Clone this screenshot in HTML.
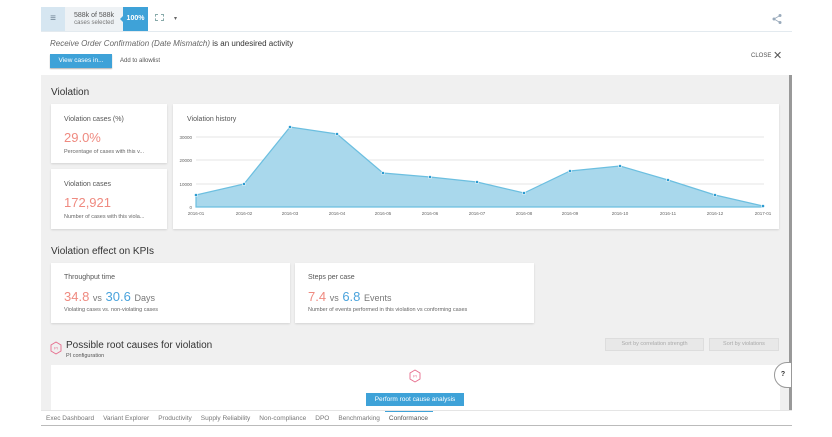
<!DOCTYPE html>
<html><head><style>
*{margin:0;padding:0;box-sizing:border-box}
body{width:832px;height:437px;background:#fff;font-family:"Liberation Sans",sans-serif;position:relative;overflow:hidden;color:#333}
.a{position:absolute}
.card{position:absolute;background:#fff;box-shadow:0 1px 2px rgba(0,0,0,.12)}
.lbl{font-size:7px;color:#555}
.sm{font-size:5.5px;color:#666}
</style></head><body>
<div class="a" style="left:41px;top:7px;width:24px;height:24px;background:#d6e6f1;color:#6a7f90;font-size:10px;text-align:center;line-height:24px">≡</div>
<div class="a" style="left:65px;top:7px;width:58px;height:24px;background:#eef2f5;text-align:center;font-size:7px;color:#555;padding-top:5px;line-height:7px">588k of 588k<br><span style="font-size:6px;color:#777">cases selected</span></div>
<div class="a" style="left:123px;top:7px;width:25px;height:24px;background:#3ea2d8;color:#fff;font-size:7px;font-weight:bold;text-align:center;line-height:24px">100%</div>
<div class="a" style="left:120px;top:16px;width:0;height:0;border-top:3px solid transparent;border-bottom:3px solid transparent;border-right:3px solid #3ea2d8"></div>
<div class="a" style="left:155px;top:14px;width:9px;height:7px;border:1px dashed #8aa"></div>
<div class="a" style="left:174px;top:15px;font-size:6px;color:#666">▾</div>
<svg class="a" style="left:772px;top:14px" width="10" height="10"><g stroke="#9ab" stroke-width=".8" fill="#9ab"><line x1="8" y1="1.5" x2="2" y2="5"/><line x1="2" y1="5" x2="8" y2="8.5"/><circle cx="8" cy="1.5" r="1.1"/><circle cx="2" cy="5" r="1.1"/><circle cx="8" cy="8.5" r="1.1"/></g></svg>
<div class="a" style="left:41px;top:31px;width:751px;height:1px;background:#e3eaef"></div>
<div class="a" style="left:50px;top:39px;font-size:8px;color:#333"><i style="color:#666">Receive Order Confirmation (Date Mismatch)</i> is an undesired activity</div>
<div class="a" style="left:751px;top:49px;font-size:6px;color:#555">CLOSE <span style="font-size:11px;vertical-align:-2px">✕</span></div>
<div class="a" style="left:50px;top:54px;width:62px;height:14px;background:#3ea2d8;color:#fff;font-size:6.5px;text-align:center;line-height:14px;box-shadow:0 1px 1px rgba(0,0,0,.3)">View cases in...</div>
<div class="a" style="left:120px;top:58px;font-size:6px;color:#555">Add to allowlist</div>
<div class="a" style="left:41px;top:75px;width:749px;height:336px;background:#f0f0f0"></div>
<div class="a" style="left:789px;top:75px;width:3px;height:336px;background:#999"></div>
<div class="a" style="left:51px;top:87px;font-size:10px;color:#333">Violation</div>
<div class="card" style="left:51px;top:104px;width:116px;height:59px">
 <div class="a lbl" style="left:13px;top:12px">Violation cases (%)</div>
 <div class="a" style="left:13px;top:26px;font-size:13px;color:#ef8a80">29.0%</div>
 <div class="a sm" style="left:13px;top:45px">Percentage of cases with this v...</div>
</div>
<div class="card" style="left:51px;top:169px;width:116px;height:60px">
 <div class="a lbl" style="left:13px;top:12px">Violation cases</div>
 <div class="a" style="left:13px;top:26px;font-size:13px;color:#ef8a80">172,921</div>
 <div class="a sm" style="left:13px;top:45px">Number of cases with this viola...</div>
</div>
<div class="card" style="left:173px;top:104px;width:606px;height:125px"></div>
<div class="a lbl" style="left:187px;top:116px">Violation history</div>
<div class="a" style="left:51px;top:365px;width:729px;height:46px;background:#fff"></div>
<svg class="a" style="left:0;top:0;z-index:1" width="832" height="437">
 <g stroke="#e6e6e6" stroke-width="1"><line x1="196" y1="137" x2="764" y2="137"/><line x1="196" y1="160" x2="764" y2="160"/><line x1="196" y1="184" x2="764" y2="184"/><line x1="196" y1="207" x2="764" y2="207" stroke="#ccc"/></g>
 <polygon points="196,207 196,195 244,184 290,127 337,134 383,173 430,177 477,182 524,193 570,171 620,166 668,180 715,195 763,206 763,207" fill="#a9d8ec" stroke="#6cbfe0" stroke-width="1.2"/>
 <g fill="#2a9ad0" stroke="#fff" stroke-width=".6"><circle cx="196" cy="195" r="1.6"/><circle cx="244" cy="184" r="1.6"/><circle cx="290" cy="127" r="1.6"/><circle cx="337" cy="134" r="1.6"/><circle cx="383" cy="173" r="1.6"/><circle cx="430" cy="177" r="1.6"/><circle cx="477" cy="182" r="1.6"/><circle cx="524" cy="193" r="1.6"/><circle cx="570" cy="171" r="1.6"/><circle cx="620" cy="166" r="1.6"/><circle cx="668" cy="180" r="1.6"/><circle cx="715" cy="195" r="1.6"/><circle cx="763" cy="206" r="1.6"/></g>
 <g font-family="Liberation Sans" font-size="4.5" fill="#666" text-anchor="end"><text x="192" y="139">30000</text><text x="192" y="162">20000</text><text x="192" y="186">10000</text><text x="192" y="209">0</text></g>
 <g font-family="Liberation Sans" font-size="4.5" fill="#666" text-anchor="middle"><text x="196" y="215">2016-01</text><text x="244" y="215">2016-02</text><text x="290" y="215">2016-03</text><text x="337" y="215">2016-04</text><text x="383" y="215">2016-05</text><text x="430" y="215">2016-06</text><text x="477" y="215">2016-07</text><text x="524" y="215">2016-08</text><text x="570" y="215">2016-09</text><text x="620" y="215">2016-10</text><text x="668" y="215">2016-11</text><text x="715" y="215">2016-12</text><text x="763" y="215">2017-01</text></g>
 <g fill="none" stroke="#e66c8c" stroke-width=".9"><polygon points="56,342 61,345 61,351 56,354 51,351 51,345"/><polygon points="415,370 420,373 420,379 415,382 410,379 410,373"/></g>
 <g font-family="Liberation Sans" font-size="4" fill="#e66c8c" text-anchor="middle"><text x="56" y="349.5">PI</text><text x="415" y="377.5">PI</text></g>
</svg>
<div class="a" style="left:51px;top:246px;font-size:10px;color:#333">Violation effect on KPIs</div>
<div class="card" style="left:51px;top:263px;width:239px;height:60px">
 <div class="a lbl" style="left:13px;top:11px">Throughput time</div>
 <div class="a" style="left:13px;top:26px;font-size:13px;color:#ef8a80">34.8 <span style="font-size:9px;color:#777">vs</span> <span style="color:#4aa3dc">30.6</span> <span style="font-size:9px;color:#777">Days</span></div>
 <div class="a sm" style="left:13px;top:44px">Violating cases vs. non-violating cases</div>
</div>
<div class="card" style="left:295px;top:263px;width:239px;height:60px">
 <div class="a lbl" style="left:13px;top:11px">Steps per case</div>
 <div class="a" style="left:13px;top:26px;font-size:13px;color:#ef8a80">7.4 <span style="font-size:9px;color:#777">vs</span> <span style="color:#4aa3dc">6.8</span> <span style="font-size:9px;color:#777">Events</span></div>
 <div class="a sm" style="left:13px;top:44px">Number of events performed in this violation vs conforming cases</div>
</div>
<div class="a" style="left:66px;top:340px;font-size:10px;color:#333">Possible root causes for violation</div>
<div class="a sm" style="left:66px;top:353px;color:#555">PI configuration</div>
<div class="a" style="left:605px;top:338px;width:99px;height:13px;background:#e8e8e8;border:1px solid #ddd;font-size:5.5px;color:#aaa;text-align:center;line-height:11px">Sort by correlation strength</div>
<div class="a" style="left:709px;top:338px;width:70px;height:13px;background:#e8e8e8;border:1px solid #ddd;font-size:5.5px;color:#aaa;text-align:center;line-height:11px">Sort by violations</div>
<div class="a" style="left:366px;top:393px;width:98px;height:13px;background:#3ea2d8;color:#fff;font-size:6.5px;text-align:center;line-height:13px">Perform root cause analysis</div>
<div class="a" style="left:774px;top:362px;width:18px;height:26px;border:1px solid #999;border-radius:13px 0 0 13px;background:#fff;font-size:7px;font-weight:bold;color:#333;text-align:center;line-height:24px">?</div>
<div class="a" style="left:41px;top:410px;width:751px;height:1px;background:#e5e5e5"></div>
<div class="a" style="left:385px;top:411px;width:48px;height:1px;background:#3ea2d8"></div>
<div class="a" style="left:46px;top:415px;font-size:6.5px;color:#777;white-space:nowrap">
<span style="margin-right:9px">Exec Dashboard</span><span style="margin-right:9px">Variant Explorer</span><span style="margin-right:9px">Productivity</span><span style="margin-right:9px">Supply Reliability</span><span style="margin-right:9px">Non-compliance</span><span style="margin-right:9px">DPO</span><span style="margin-right:9px">Benchmarking</span><span style="color:#555">Conformance</span></div>
<div class="a" style="left:41px;top:425px;width:751px;height:1px;background:#bbb"></div>
</body></html>
